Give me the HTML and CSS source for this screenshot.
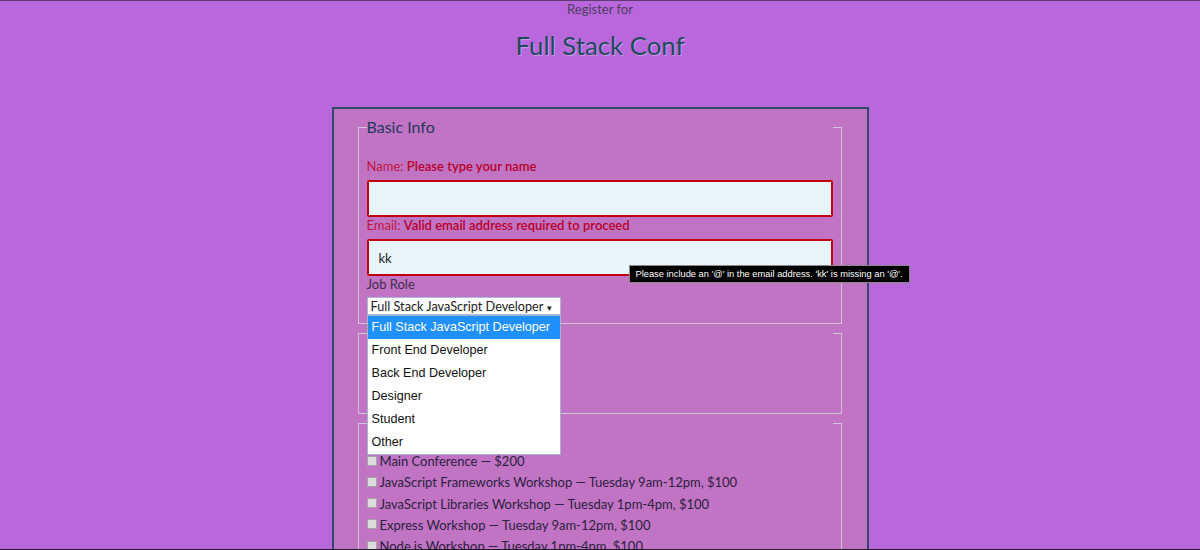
FILE: index.html
```html
<!DOCTYPE html>
<html lang="en">
<head>
<meta charset="utf-8">
<title>Full Stack Conf</title>
<link rel="stylesheet" href="styles.css">
</head>
<body>
<div class="frame-top"></div>
<header class="page-header">
  <p class="subtitle">Register for</p>
  <h1 class="title">Full Stack Conf</h1>
</header>
<form class="container">
  <fieldset class="group">
    <legend class="group-legend">Basic Info</legend>
    <label class="field-label error first">Name: <span class="hint">Please type your name</span></label>
    <input class="text-input invalid" type="text">
    <label class="field-label error">Email: <span class="hint">Valid email address required to proceed</span></label>
    <div class="input-wrap">
      <input class="text-input invalid" type="text" value="kk">
      <div class="tooltip">Please include an '@' in the email address. 'kk' is missing an '@'.</div>
    </div>
    <label class="field-label plain">Job Role</label>
    <div class="select-wrap">
      <div class="select-box">Full Stack JavaScript Developer <span class="arrow">▾</span></div>
      <ul class="dropdown">
        <li class="option selected">Full Stack JavaScript Developer</li>
        <li class="option">Front End Developer</li>
        <li class="option">Back End Developer</li>
        <li class="option">Designer</li>
        <li class="option">Student</li>
        <li class="option">Other</li>
      </ul>
    </div>
  </fieldset>
  <fieldset class="group shirt">
    <legend class="group-legend">T-Shirt Info</legend>
    <div class="shirt-row"></div>
  </fieldset>
  <fieldset class="group activities">
    <legend class="group-legend">Register for Activities</legend>
    <label class="activity first"><input class="check" type="checkbox">Main Conference — $200</label>
    <label class="activity"><input class="check" type="checkbox">JavaScript Frameworks Workshop — Tuesday 9am-12pm, $100</label>
    <label class="activity"><input class="check" type="checkbox">JavaScript Libraries Workshop — Tuesday 1pm-4pm, $100</label>
    <label class="activity"><input class="check" type="checkbox">Express Workshop — Tuesday 9am-12pm, $100</label>
    <label class="activity"><input class="check" type="checkbox">Node.js Workshop — Tuesday 1pm-4pm, $100</label>
    <label class="activity"><input class="check" type="checkbox">Build tools Workshop — Wednesday 9am-12pm, $100</label>
  </fieldset>
</form>
<div class="frame-bottom"></div>
</body>
</html>
```

FILE: styles.css
```css
html, body {
  margin: 0;
  padding: 0;
}
body {
  background: #b967dd;
  font-family: Lato, "Open Sans", sans-serif;
  color: #2f2840;
  overflow: hidden;
}
.frame-top {
  position: fixed;
  top: 0;
  left: 0;
  right: 0;
  height: 1px;
  background: #5c3d6c;
  z-index: 5;
}
.frame-bottom {
  position: fixed;
  bottom: 0;
  left: 0;
  right: 0;
  height: 1px;
  background: #241c2a;
  z-index: 5;
}
.page-header {
  text-align: center;
  padding-top: 1px;
}
.subtitle {
  margin: 0;
  font-size: 13px;
  line-height: 16px;
  color: #4a3f5c;
}
.title {
  margin: 13px 0 0;
  font-size: 25.8px;
  line-height: 30px;
  font-weight: 400;
  color: #1d4a5c;
  text-shadow: 1px 1px 1px rgba(255, 255, 255, 0.35);
}
.container {
  width: 484px;
  margin: 47px auto 0;
  border: 2px solid #2f4a6a;
  border-bottom: none;
  background: #c174c3;
  padding: 9px 25px 40px 24px;
}
.group {
  margin: 0;
  padding: 0 8px 8px;
  border: 1px solid #d2c6d6;
}
.group-legend {
  width: 100%;
  padding: 0;
  font-size: 16px;
  line-height: 18px;
  color: #22385a;
  background: #c174c3;
}
.field-label {
  display: block;
  font-size: 13px;
  line-height: 16px;
}
.field-label.first {
  margin-top: 22px;
}
.field-label.error {
  color: #c0143c;
}
.hint {
  font-weight: 600;
  color: #b8002a;
}
.field-label.plain {
  color: #3a2f4a;
}
.text-input {
  display: block;
  box-sizing: border-box;
  width: 466px;
  height: 37px;
  margin: 6px 0 0;
  padding: 0 10px;
  border: 2px solid #c0000c;
  border-radius: 2px;
  background: #e8f4fa;
  font-family: Lato, sans-serif;
  font-size: 13px;
  color: #222;
  outline: none;
}
.input-wrap {
  position: relative;
}
.tooltip {
  position: absolute;
  left: 262px;
  top: 26px;
  padding: 0 6px;
  height: 18px;
  line-height: 16px;
  box-sizing: border-box;
  background: #000;
  border: 1px solid #8a8a8a;
  color: #fff;
  font-family: "Liberation Sans", Arial, sans-serif;
  font-size: 9.3px;
  white-space: nowrap;
  z-index: 3;
}
.select-wrap {
  position: relative;
  width: 194px;
  margin-top: 5px;
}
.select-box {
  box-sizing: border-box;
  height: 18px;
  padding: 0 3px;
  border: 1px solid #a9b7d8;
  background: #fff;
  font-size: 12.7px;
  line-height: 16px;
  color: #222;
  white-space: nowrap;
}
.arrow {
  font-size: 9px;
  margin-left: 1px;
}
.dropdown {
  position: absolute;
  top: 18px;
  left: 0;
  width: 194px;
  box-sizing: border-box;
  margin: 0;
  padding: 0;
  list-style: none;
  background: #fff;
  border: 1px solid #a8b4c8;
  z-index: 4;
}
.option {
  height: 23px;
  line-height: 23px;
  padding-left: 4px;
  font-family: "Liberation Sans", Arial, sans-serif;
  font-size: 12.6px;
  color: #111;
  white-space: nowrap;
}
.option.selected {
  background: #1e90ff;
  color: #fff;
}
.shirt-row {
  height: 63px;
}
.activity {
  display: flex;
  align-items: center;
  font-size: 13px;
  line-height: 21.25px;
  color: #2b2140;
}
.activity.first {
  margin-top: 19px;
}
.check {
  appearance: none;
  -webkit-appearance: none;
  width: 10px;
  height: 10px;
  margin: 0 3px 2px 0;
  border: 1px solid #a4a4a4;
  background: #dcdcdc;
  border-radius: 0;
  flex: none;
}
```
